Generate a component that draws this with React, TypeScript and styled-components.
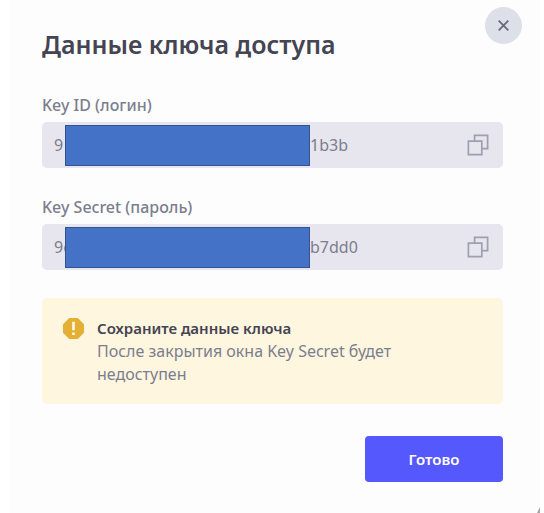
import React, { useId } from "react";
import styled, { createGlobalStyle } from "styled-components";

const GlobalStyle = createGlobalStyle`
  * { box-sizing: border-box; }
  body {
    margin: 0;
    background: #ffffff;
    font-family: "Noto Sans", "Open Sans", sans-serif;
    font-size: 16px;
    line-height: 23px;
    color: #7b7e8d;
  }
  button { font: inherit; border: 0; padding: 0; cursor: pointer; }
`;

const Dialog = styled.main`
  position: relative;
  min-height: 100vh;
  margin: 0 4px 0 10px;
  padding: 27px 37px 31px 32px;
  background: #fdfdfd;
  overflow: hidden;
`;

const Title = styled.h1`
  margin: 0 0 33px;
  font-size: 25px;
  line-height: 34px;
  font-weight: 600;
  color: #444452;
`;

const CloseButton = styled.button`
  position: absolute;
  top: 7px;
  right: 18px;
  display: flex;
  align-items: center;
  justify-content: center;
  width: 37px;
  height: 37px;
  border-radius: 50%;
  background: #dddfe9;
  color: #696a7b;
`;

const Field = styled.div`
  display: flex;
  flex-direction: column;
  margin-bottom: 28px;
`;

const Label = styled.label`
  margin-bottom: 5px;
  line-height: 23px;
  font-weight: 500;
`;

const FieldBox = styled.div`
  display: flex;
  align-items: center;
  justify-content: space-between;
  height: 46px;
  padding: 0 14px 0 12px;
  border-radius: 5px;
  background: #e7e5ee;
`;

const Value = styled.output`
  display: flex;
  align-items: center;
  min-width: 0;
`;

const Start = styled.span`
  width: 11px;
  white-space: nowrap;
`;

const Mask = styled.span`
  z-index: 1;
  width: 245px;
  height: 41px;
  border: 1px solid #31538f;
  background: #4472c6;
`;

const CopyButton = styled.button`
  display: flex;
  background: transparent;
  color: #9da0ae;
`;

const Notice = styled.section`
  display: flex;
  gap: 13px;
  margin-bottom: 32px;
  padding: 19px 60px 18px 21px;
  border-radius: 5px;
  background: #fff6e0;

  svg { flex: none; margin-top: 1px; }
`;

const NoticeTitle = styled.h2`
  margin: 0;
  font-size: 15px;
  line-height: 23px;
  font-weight: 600;
  color: #444452;
`;

const NoticeText = styled.p`
  margin: 0;
`;

const Actions = styled.footer`
  display: flex;
  justify-content: flex-end;
`;

const PrimaryButton = styled.button`
  width: 138px;
  height: 46px;
  border-radius: 4px;
  background: #5558fc;
  color: #ffffff;

  && {
    font-size: 15px;
    font-weight: 600;
  }
`;

const CornerMark = styled.svg`
  position: absolute;
  right: 0;
  bottom: 0;
`;

const CloseIcon = () => (
  <svg width="13" height="13" viewBox="0 0 13 13" fill="none" stroke="currentColor" strokeWidth="1.8" aria-hidden="true">
    <path d="M1.7 1.7l9.6 9.6M11.3 1.7l-9.6 9.6" />
  </svg>
);

const CopyIcon = () => (
  <svg width="22" height="22" viewBox="0 0 22 22" fill="none" stroke="currentColor" strokeWidth="1.7" aria-hidden="true">
    <path d="M1.4 7.2h13.4v13.4H1.4zM7.6 7.2V1.4h13v13.2h-5.8" />
  </svg>
);

const WarningIcon = () => (
  <svg width="21" height="21" viewBox="0 0 21 21" aria-hidden="true">
    <path d="M6.2 0h8.6L21 6.2v8.6L14.8 21H6.2L0 14.8V6.2z" fill="#e3b035" />
    <path d="M9.2 3.8h2.6v8.4H9.2zM9.2 14.4h2.6V17H9.2z" fill="#fff9e8" />
  </svg>
);

type SecretFieldProps = { label: string; start: string; end: string };

function SecretField({ label, start, end }: SecretFieldProps) {
  const id = useId();
  return (
    <Field>
      <Label htmlFor={id}>{label}</Label>
      <FieldBox>
        <Value id={id}>
          <Start>{start}</Start>
          <Mask />
          <span>{end}</span>
        </Value>
        <CopyButton type="button" aria-label={`Скопировать ${label}`}>
          <CopyIcon />
        </CopyButton>
      </FieldBox>
    </Field>
  );
}

export default function App() {
  return (
    <>
      <GlobalStyle />
      <Dialog>
        <CloseButton type="button" aria-label="Закрыть">
          <CloseIcon />
        </CloseButton>
        <Title>Данные ключа доступа</Title>
        <SecretField label="Key ID (логин)" start="9" end="1b3b" />
        <SecretField label="Key Secret (пароль)" start="9e" end="b7dd0" />
        <Notice>
          <WarningIcon />
          <div>
            <NoticeTitle>Сохраните данные ключа</NoticeTitle>
            <NoticeText>После закрытия окна Key Secret будет недоступен</NoticeText>
          </div>
        </Notice>
        <Actions>
          <PrimaryButton type="button">Готово</PrimaryButton>
        </Actions>
        <CornerMark width="3" height="6" viewBox="0 0 3 6" aria-hidden="true">
          <path d="M3 0v6H0z" fill="#a4a4a8" />
        </CornerMark>
      </Dialog>
    </>
  );
}
